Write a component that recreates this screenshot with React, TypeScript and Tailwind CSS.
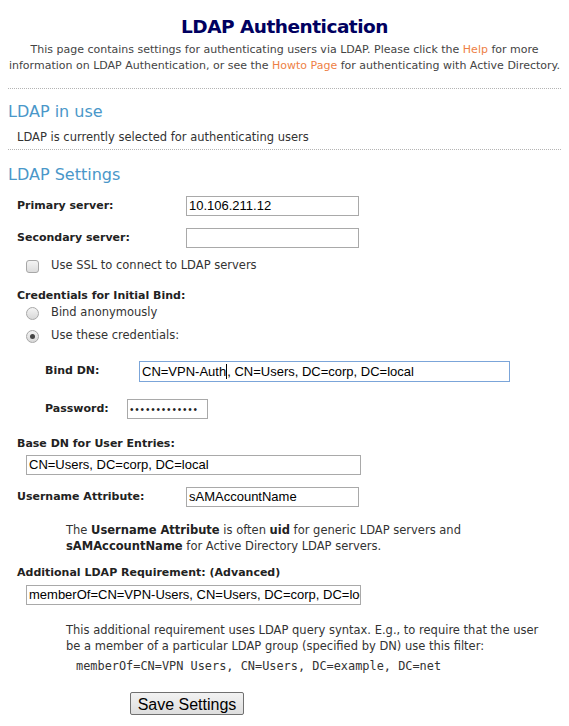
const Box = ({ w, value, className = "" }: any) => (
  <div className={`h-[20px] border border-[#a9a9a9] bg-white px-[2px] flex items-center font-['Liberation_Sans',Arial,sans-serif] text-[13px] text-black whitespace-nowrap overflow-hidden ${w} ${className}`}>
    {value}
  </div>
);

const Check = () => (
  <span className="inline-block w-[13px] h-[13px] rounded-[3px] border border-[#a7a7a7] bg-gradient-to-b from-[#f4f4f4] to-[#dcdcdc]"></span>
);

const Radio = ({ on }: any) => (
  <span className="w-[13px] h-[13px] rounded-full border border-[#a7a7a7] bg-gradient-to-b from-[#f4f4f4] to-[#d8d8d8] flex items-center justify-center">
    {on && <span className="w-[5px] h-[5px] rounded-full bg-[#444]"></span>}
  </span>
);

export default function App() {
  return (
    <div className="w-[569px] h-[726px] bg-white px-[8px] font-['DejaVu_Sans',Verdana,sans-serif] text-[11.5px] text-[#333] overflow-hidden">
      <h1 className="pt-[13px] text-center text-[18.5px] tracking-[-0.5px] font-bold leading-[28px] text-[#000060]">LDAP Authentication</h1>
      <p className="mt-[1px] -mx-[4px] text-center text-[11px] leading-[16px] whitespace-nowrap text-[#444]">
        This page contains settings for authenticating users via LDAP. Please click the <span className="text-[#ee7f45]">Help</span> for more
        <br />
        information on LDAP Authentication, or see the <span className="text-[#ee7f45]">Howto Page</span> for authenticating with Active Directory.
      </p>
      <div className="mt-[14px] border-t border-dotted border-[#b4b4b4]"></div>

      <h2 className="mt-[12px] text-[16px] leading-[22px] text-[#4a97c9]">LDAP in use</h2>
      <p className="mt-[6px] pl-[9px] leading-[16px]">LDAP is currently selected for authenticating users</p>
      <div className="mt-[4px] border-t border-dotted border-[#b4b4b4]"></div>

      <h2 className="mt-[14px] text-[16px] leading-[22px] text-[#4a97c9]">LDAP Settings</h2>

      <div className="pl-[9px] text-[#222]">
        <div className="mt-[10px] flex items-center h-[20px]">
          <span className="w-[169px] font-bold text-[11px]">Primary server:</span>
          <Box w="w-[173px]" value="10.106.211.12" />
        </div>
        <div className="mt-[12px] flex items-center h-[20px]">
          <span className="w-[169px] font-bold text-[11px]">Secondary server:</span>
          <Box w="w-[173px]" value="" />
        </div>
        <div className="mt-[8px] pl-[9px] flex items-center gap-[12px] h-[20px]">
          <Check />
          <span className="text-[#333]">Use SSL to connect to LDAP servers</span>
        </div>
        <div className="mt-[12px] font-bold text-[11px] leading-[16px]">Credentials for Initial Bind:</div>
        <div className="mt-0 pl-[9px] flex items-center gap-[12px] h-[18px]">
          <Radio />
          <span className="text-[#333]">Bind anonymously</span>
        </div>
        <div className="mt-[5px] pl-[9px] flex items-center gap-[12px] h-[18px]">
          <Radio on />
          <span className="text-[#333]">Use these credentials:</span>
        </div>

        <div className="mt-[16px] pl-[28px] flex items-center h-[21px]">
          <span className="w-[94px] font-bold text-[11px]">Bind DN:</span>
          <div className="h-[21px] w-[371px] border border-[#7ba5d9] bg-white px-[2px] flex items-center font-['Liberation_Sans',Arial,sans-serif] text-[13px] text-black whitespace-nowrap">
            CN=VPN-Auth<span className="inline-block w-px h-[15px] bg-black"></span>, CN=Users, DC=corp, DC=local
          </div>
        </div>
        <div className="mt-[17px] pl-[28px] flex items-center h-[20px]">
          <span className="w-[82px] font-bold text-[11px]">Password:</span>
          <Box w="w-[81px]" value={<span className="text-[10px] tracking-[1.8px] text-[#222]">•••••••••••••</span>} />
        </div>

        <div className="mt-[17px] font-bold text-[11px] leading-[16px]">Base DN for User Entries:</div>
        <Box w="w-[335px]" value="CN=Users, DC=corp, DC=local" className="mt-[3px] ml-[9px]" />

        <div className="mt-[12px] flex items-center h-[20px]">
          <span className="w-[169px] font-bold text-[11px]">Username Attribute:</span>
          <Box w="w-[173px]" value="sAMAccountName" />
        </div>
        <p className="mt-[15px] pl-[49px] leading-[16px] text-[#333]">
          The <b className="text-[#222]">Username Attribute</b> is often <b className="text-[#222]">uid</b> for generic LDAP servers and
          <br />
          <b className="text-[#222]">sAMAccountName</b> for Active Directory LDAP servers.
        </p>

        <div className="mt-[11px] font-bold text-[11px] leading-[16px]">Additional LDAP Requirement: (Advanced)</div>
        <Box w="w-[335px]" value="memberOf=CN=VPN-Users, CN=Users, DC=corp, DC=local" className="mt-[4px] ml-[9px]" />

        <p className="mt-[17px] pl-[49px] leading-[16px] text-[#333]">
          This additional requirement uses LDAP query syntax. E.g., to require that the user
          <br />
          be a member of a particular LDAP group (specified by DN) use this filter:
        </p>
        <div className="mt-[4px] pl-[59px] font-['DejaVu_Sans_Mono',monospace] text-[11.9px] leading-[16px] text-[#333]">
          memberOf=CN=VPN Users, CN=Users, DC=example, DC=net
        </div>

        <button className="mt-[18px] ml-[113px] h-[23px] w-[114px] border border-[#707070] rounded-[2px] bg-gradient-to-b from-[#f2f2f2] to-[#dedede] font-['Liberation_Sans',Arial,sans-serif] text-[16px] text-black">
          Save Settings
        </button>
      </div>
    </div>
  );
}
